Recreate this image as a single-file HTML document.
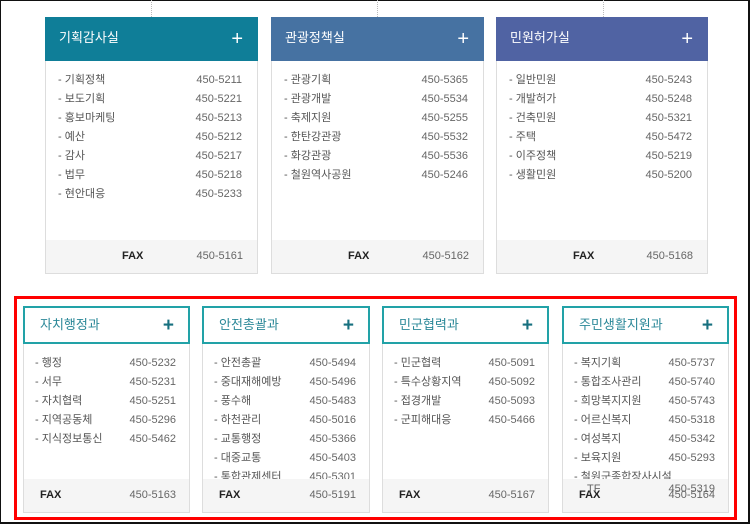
<!DOCTYPE html>
<html><head><meta charset="utf-8"><style>
*{margin:0;padding:0;box-sizing:border-box}
body{width:750px;height:524px;position:relative;background:#fff;font-family:"Liberation Sans","Noto Sans CJK KR",sans-serif;overflow:hidden}
.frame{position:absolute;left:0;top:0;width:750px;height:524px;border:1px solid #111;border-right-width:2px;border-bottom-width:2px}
.dot{position:absolute;top:0;height:17px;border-left:1px dotted #bbb}
.card{position:absolute;border:1px solid #ddd;background:#fff}
.hd{position:absolute;left:-1px;right:-1px;top:-1px;color:#fff;font-size:13px}
.hd span{position:absolute;left:14px;top:0;line-height:42px}
.hd b{position:absolute;right:15px;top:0;line-height:44px;font-size:20px;font-weight:normal}
.row{position:absolute;left:12px;right:15px;font-size:11px;color:#555;height:19px;line-height:19px}
.row span{line-height:19px;height:19px;display:block;top:0}
.row .n{position:absolute;left:0}
.row .p{position:absolute;right:0;color:#666}
.fax{position:absolute;left:0;right:0;bottom:0;height:33px;background:#f5f5f5}
.fax span{line-height:33px;top:0;font-size:11px}
.fax .f{position:absolute;font-weight:bold;color:#222}
.fax .p{position:absolute;right:14px;color:#666}
.hd2{position:absolute;left:-1px;right:-1px;top:-1px;height:38px;border:2px solid #22a2a7;background:#fff;color:#2b8898;font-size:13px}
.hd2 span{position:absolute;left:15px;top:0;line-height:34px}
.hd2 b{position:absolute;right:14px;top:0;line-height:36px;font-size:19px;color:#17707f}
.red{position:absolute;left:14px;top:296px;width:723px;height:224px;border:3px solid #f00}
</style></head><body>
<div class="frame"></div>
<div class="dot" style="left:151px"></div><div class="dot" style="left:377px"></div><div class="dot" style="left:603px"></div>

<div class="card" style="left:45px;top:17px;width:213px;height:257px">
<div class="hd" style="height:44px;background:#0f7e98"><span>기획감사실</span><b>+</b></div>
<div class="row" style="top:53px"><span class="n">- 기획정책</span><span class="p">450-5211</span></div>
<div class="row" style="top:72px"><span class="n">- 보도기획</span><span class="p">450-5221</span></div>
<div class="row" style="top:91px"><span class="n">- 홍보마케팅</span><span class="p">450-5213</span></div>
<div class="row" style="top:110px"><span class="n">- 예산</span><span class="p">450-5212</span></div>
<div class="row" style="top:129px"><span class="n">- 감사</span><span class="p">450-5217</span></div>
<div class="row" style="top:148px"><span class="n">- 법무</span><span class="p">450-5218</span></div>
<div class="row" style="top:167px"><span class="n">- 현안대응</span><span class="p">450-5233</span></div>
<div class="fax"><span class="f" style="left:76px">FAX</span><span class="p">450-5161</span></div>
</div>

<div class="card" style="left:271px;top:17px;width:213px;height:257px">
<div class="hd" style="height:44px;background:#4672a2"><span>관광정책실</span><b>+</b></div>
<div class="row" style="top:53px"><span class="n">- 관광기획</span><span class="p">450-5365</span></div>
<div class="row" style="top:72px"><span class="n">- 관광개발</span><span class="p">450-5534</span></div>
<div class="row" style="top:91px"><span class="n">- 축제지원</span><span class="p">450-5255</span></div>
<div class="row" style="top:110px"><span class="n">- 한탄강관광</span><span class="p">450-5532</span></div>
<div class="row" style="top:129px"><span class="n">- 화강관광</span><span class="p">450-5536</span></div>
<div class="row" style="top:148px"><span class="n">- 철원역사공원</span><span class="p">450-5246</span></div>
<div class="fax"><span class="f" style="left:76px">FAX</span><span class="p">450-5162</span></div>
</div>

<div class="card" style="left:496px;top:17px;width:212px;height:257px">
<div class="hd" style="height:44px;background:#5063a3"><span>민원허가실</span><b>+</b></div>
<div class="row" style="top:53px"><span class="n">- 일반민원</span><span class="p">450-5243</span></div>
<div class="row" style="top:72px"><span class="n">- 개발허가</span><span class="p">450-5248</span></div>
<div class="row" style="top:91px"><span class="n">- 건축민원</span><span class="p">450-5321</span></div>
<div class="row" style="top:110px"><span class="n">- 주택</span><span class="p">450-5472</span></div>
<div class="row" style="top:129px"><span class="n">- 이주정책</span><span class="p">450-5219</span></div>
<div class="row" style="top:148px"><span class="n">- 생활민원</span><span class="p">450-5200</span></div>
<div class="fax"><span class="f" style="left:76px">FAX</span><span class="p">450-5168</span></div>
</div>

<div class="red"></div>

<div class="card" style="left:23px;top:306px;width:167px;height:207px">
<div class="hd2"><span>자치행정과</span><b>+</b></div>
<div class="row" style="top:47px;left:11px;right:13px"><span class="n">- 행정</span><span class="p">450-5232</span></div>
<div class="row" style="top:66px;left:11px;right:13px"><span class="n">- 서무</span><span class="p">450-5231</span></div>
<div class="row" style="top:85px;left:11px;right:13px"><span class="n">- 자치협력</span><span class="p">450-5251</span></div>
<div class="row" style="top:104px;left:11px;right:13px"><span class="n">- 지역공동체</span><span class="p">450-5296</span></div>
<div class="row" style="top:123px;left:11px;right:13px"><span class="n">- 지식정보통신</span><span class="p">450-5462</span></div>
<div class="fax"><span class="f" style="left:16px">FAX</span><span class="p" style="right:13px">450-5163</span></div>
</div>

<div class="card" style="left:202px;top:306px;width:168px;height:207px">
<div class="hd2"><span>안전총괄과</span><b>+</b></div>
<div class="row" style="top:47px;left:11px;right:13px"><span class="n">- 안전총괄</span><span class="p">450-5494</span></div>
<div class="row" style="top:66px;left:11px;right:13px"><span class="n">- 중대재해예방</span><span class="p">450-5496</span></div>
<div class="row" style="top:85px;left:11px;right:13px"><span class="n">- 풍수해</span><span class="p">450-5483</span></div>
<div class="row" style="top:104px;left:11px;right:13px"><span class="n">- 하천관리</span><span class="p">450-5016</span></div>
<div class="row" style="top:123px;left:11px;right:13px"><span class="n">- 교통행정</span><span class="p">450-5366</span></div>
<div class="row" style="top:142px;left:11px;right:13px"><span class="n">- 대중교통</span><span class="p">450-5403</span></div>
<div class="row" style="top:161px;left:11px;right:13px"><span class="n">- 통합관제센터</span><span class="p">450-5301</span></div>
<div class="fax"><span class="f" style="left:16px">FAX</span><span class="p" style="right:13px">450-5191</span></div>
</div>

<div class="card" style="left:382px;top:306px;width:167px;height:207px">
<div class="hd2"><span>민군협력과</span><b>+</b></div>
<div class="row" style="top:47px;left:11px;right:13px"><span class="n">- 민군협력</span><span class="p">450-5091</span></div>
<div class="row" style="top:66px;left:11px;right:13px"><span class="n">- 특수상황지역</span><span class="p">450-5092</span></div>
<div class="row" style="top:85px;left:11px;right:13px"><span class="n">- 접경개발</span><span class="p">450-5093</span></div>
<div class="row" style="top:104px;left:11px;right:13px"><span class="n">- 군피해대응</span><span class="p">450-5466</span></div>
<div class="fax"><span class="f" style="left:16px">FAX</span><span class="p" style="right:13px">450-5167</span></div>
</div>

<div class="card" style="left:562px;top:306px;width:167px;height:207px">
<div class="hd2"><span>주민생활지원과</span><b>+</b></div>
<div class="row" style="top:47px;left:11px;right:13px"><span class="n">- 복지기획</span><span class="p">450-5737</span></div>
<div class="row" style="top:66px;left:11px;right:13px"><span class="n">- 통합조사관리</span><span class="p">450-5740</span></div>
<div class="row" style="top:85px;left:11px;right:13px"><span class="n">- 희망복지지원</span><span class="p">450-5743</span></div>
<div class="row" style="top:104px;left:11px;right:13px"><span class="n">- 어르신복지</span><span class="p">450-5318</span></div>
<div class="row" style="top:123px;left:11px;right:13px"><span class="n">- 여성복지</span><span class="p">450-5342</span></div>
<div class="row" style="top:142px;left:11px;right:13px"><span class="n">- 보육지원</span><span class="p">450-5293</span></div>
<div class="row" style="top:161px;left:11px;right:13px"><span class="n">- 철원군종합장사시설</span></div>
<div class="fax"><span class="f" style="left:16px">FAX</span><span class="p" style="right:13px">450-5164</span></div>
<div class="row" style="top:173px;left:11px;right:13px;color:#666"><span class="n" style="left:13px">TF</span><span class="p">450-5319</span></div>
</div>
</body></html>
